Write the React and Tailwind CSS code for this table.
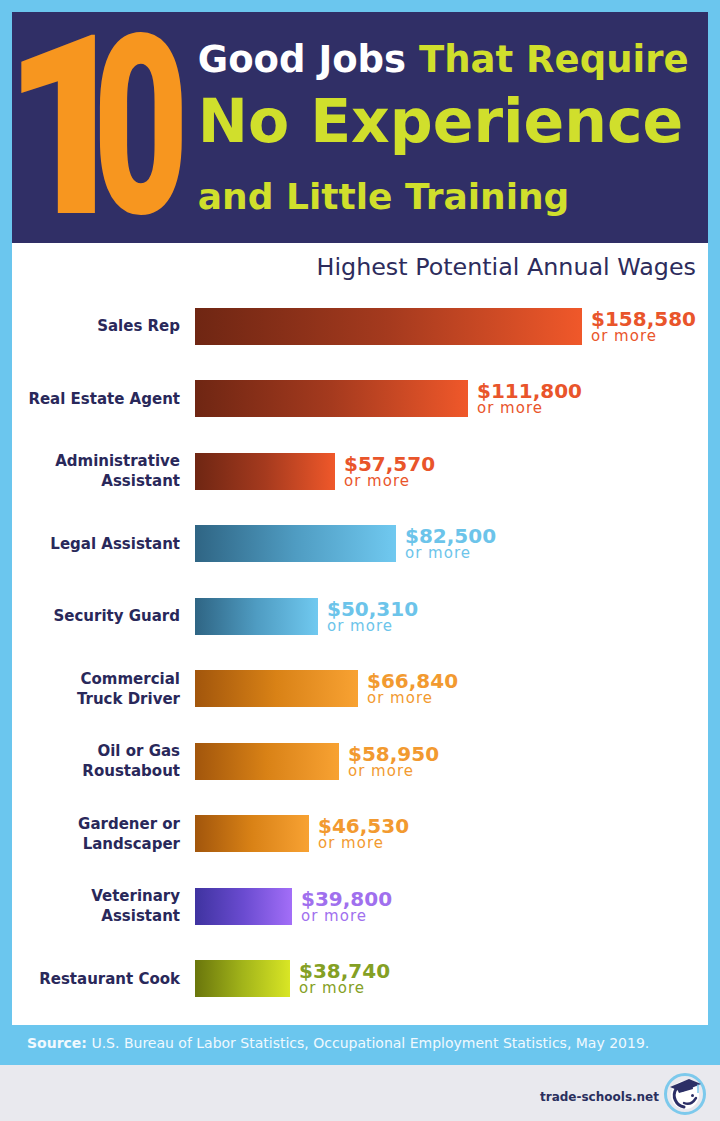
import React from 'react';

const DATA = [
  { label: ['Sales Rep'], value: 158580, theme: 'red' },
  { label: ['Real Estate Agent'], value: 111800, theme: 'red' },
  { label: ['Administrative', 'Assistant'], value: 57570, theme: 'red' },
  { label: ['Legal Assistant'], value: 82500, theme: 'blue' },
  { label: ['Security Guard'], value: 50310, theme: 'blue' },
  { label: ['Commercial', 'Truck Driver'], value: 66840, theme: 'orange' },
  { label: ['Oil or Gas', 'Roustabout'], value: 58950, theme: 'orange' },
  { label: ['Gardener or', 'Landscaper'], value: 46530, theme: 'orange' },
  { label: ['Veterinary', 'Assistant'], value: 39800, theme: 'purple' },
  { label: ['Restaurant Cook'], value: 38740, theme: 'green' },
];

const THEMES = {
  red: {
    bar: 'bg-linear-to-r from-[#6f2613] via-[#a53a1e] to-[#f0582a]',
    text: 'text-[#e9552b]',
  },
  blue: {
    bar: 'bg-linear-to-r from-[#2f6584] via-[#4f9cc2] to-[#70c9f0]',
    text: 'text-[#6cc4ea]',
  },
  orange: {
    bar: 'bg-linear-to-r from-[#a2560c] via-[#d98216] to-[#f8a232]',
    text: 'text-[#f29a30]',
  },
  purple: {
    bar: 'bg-linear-to-r from-[#3f33a0] via-[#6a4bd0] to-[#a36ef8]',
    text: 'text-[#a070ee]',
  },
  green: {
    bar: 'bg-linear-to-r from-[#6a760c] via-[#a2b41a] to-[#d9e625]',
    text: 'text-[#84a024]',
  },
};

const MAX = 158580;
const MAX_W = 387;

function Row({ item }) {
  const t = THEMES[item.theme];
  const width = Math.round((item.value / MAX) * MAX_W);
  return (
    <div className="flex items-center h-[37px]">
      <div className="w-[168px] text-right font-['DejaVu_Sans',sans-serif] font-bold text-[15px] leading-[20px] text-[#29285a]">
        {item.label.map((l) => (
          <div key={l}>{l}</div>
        ))}
      </div>
      <div className="ml-[15px] flex items-start self-stretch">
        <div className={`h-[37px] ${t.bar}`} style={{ width }} />
        <div className={`ml-[9px] pt-[1px] flex flex-col font-['DejaVu_Sans',sans-serif] ${t.text}`}>
          <span className="font-bold text-[20px] leading-[20px] whitespace-nowrap">
            ${item.value.toLocaleString('en-US')}
          </span>
          <span className="text-[15px] leading-[15px] tracking-[1px] whitespace-nowrap">or more</span>
        </div>
      </div>
    </div>
  );
}

function Logo() {
  return (
    <svg width="44" height="44" viewBox="0 0 44 44">
      <circle cx="22" cy="22" r="19.5" fill="none" stroke="#7cc9ec" strokeWidth="3" />
      <circle cx="22" cy="23" r="14" fill="#ffffff" />
      <path d="M13 17 A12 12 0 0 0 21 35" fill="none" stroke="#2c2f66" strokeWidth="3" strokeLinecap="round" />
      <path d="M21 31 Q28 34 33 26" fill="none" stroke="#2c2f66" strokeWidth="2.4" strokeLinecap="round" />
      <circle cx="29.5" cy="23.5" r="1.5" fill="#2c2f66" />
      <polygon points="7,15 26,7 38,12 19,20" fill="#2c2f66" />
      <polygon points="14,17 29,12 30,17 16,21" fill="#2c2f66" />
      <path d="M35 12.5 L35 21" stroke="#7cc9ec" strokeWidth="1.5" />
    </svg>
  );
}

export default function App() {
  return (
    <div className="w-[720px] h-[1121px] bg-[#6bc6ee] flex flex-col overflow-hidden">
      <div className="px-3 pt-3 flex flex-col">
        <header className="h-[231px] bg-[#302f66] flex">
          <div className="shrink-0 flex -ml-[9px] font-['Roboto',sans-serif] font-black text-[250px] leading-[231px] text-[#f7961f]">
            <span className="inline-block origin-left scale-x-[0.9] -mr-[55px]">1</span>
            <span className="inline-block origin-left scale-x-[0.66] -mr-[40px]">0</span>
          </div>
          <div className="flex flex-col font-['DejaVu_Sans',sans-serif] font-bold pt-[29px]">
            <div className="text-[37px] leading-none whitespace-nowrap">
              <span className="text-white">Good Jobs</span>{' '}
              <span className="text-[#d0df2c]">That Require</span>
            </div>
            <div className="mt-[13px] text-[60px] leading-none text-[#d0df2c] whitespace-nowrap">
              No Experience
            </div>
            <div className="mt-[28px] text-[36px] leading-none text-[#d0df2c] whitespace-nowrap">
              and Little Training
            </div>
          </div>
        </header>
        <section className="h-[782px] bg-white flex flex-col">
          <div className="mt-[13px] pr-3 text-right font-['DejaVu_Sans',sans-serif] text-[23.8px] leading-none text-[#2d2c5c]">
            Highest Potential Annual Wages
          </div>
          <div className="mt-[28px] flex flex-col gap-[35.5px]">
            {DATA.map((item) => (
              <Row key={item.label.join(' ')} item={item} />
            ))}
          </div>
        </section>
      </div>
      <div className="h-[40px] flex items-center px-[27px] pb-[4px] font-['DejaVu_Sans',sans-serif] text-[14px] text-[#f0f9fe] whitespace-nowrap">
        <span className="font-bold">Source:</span>
        <span>&nbsp;U.S. Bureau of Labor Statistics, Occupational Employment Statistics, May 2019.</span>
      </div>
      <footer className="h-[56px] bg-[#e9e9ee] flex items-center justify-end pr-[13px] pt-[2px] gap-[4px]">
        <span className="font-['DejaVu_Sans',sans-serif] font-bold text-[12px] text-[#2a2f5e] mt-[6px]">
          trade-schools.net
        </span>
        <Logo />
      </footer>
    </div>
  );
}
